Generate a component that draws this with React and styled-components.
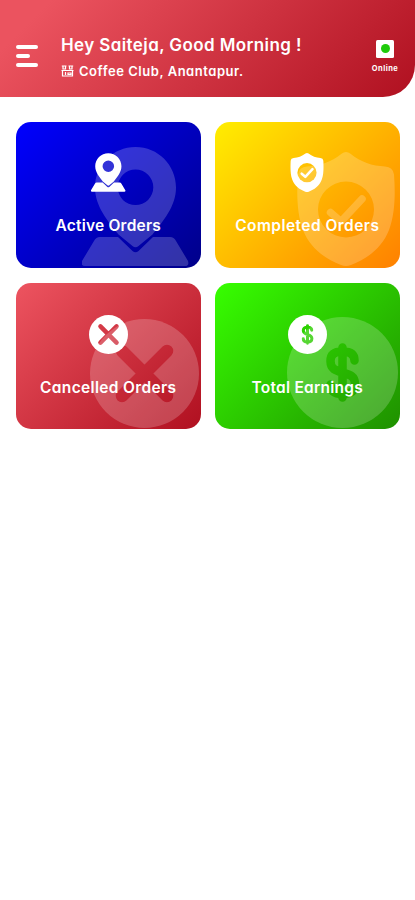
import React, { useId } from 'react'
import styled, { createGlobalStyle } from 'styled-components'

const cards = [
    { label: 'Active Orders', icon: PinIcon, from: '#0000ff', to: '#000089', track: '0.22px', small: [34.5, 39], big: [106.5, 119], right: 12, top: 25 },
    { label: 'Completed Orders', icon: ShieldIcon, from: '#ffee00', to: '#ff8000', track: '0.45px', small: [34, 39], big: [98, 114], right: 5, top: 30 },
    { label: 'Cancelled Orders', icon: CancelIcon, from: '#ed5460', to: '#b01020', track: '0.34px', small: [39, 39], big: [109, 109], right: 2, top: 36 },
    { label: 'Total Earnings', icon: DollarIcon, from: '#37ff00', to: '#1f9000', track: '0.26px', small: [39, 39], big: [111, 111], right: 2, top: 34 },
]

function PinIcon({ size }) {
    return (
        <svg width={size[0]} height={size[1]} viewBox="0 0 106.5 119" fill="currentColor">
            <path fillRule="evenodd" d="M53.5 0C31 0 13 18 13 40.5c0 19 13 33.5 23.5 47L50.5 99q3 2.5 6 0L70.5 87.5C81 74 94 59.5 94 40.5 94 18 76 0 53.5 0zm0 22.500a17.800 17.800 0 1 1 0 35.600 17.800 17.800 0 0 1 0-35.600z" />
            <path d="M18 90h18l14.500 14q3 2.500 6 0L71 90h17q4 0 6 4l12 20q1.500 5-3 5H3q-4.500 0-3-5l12-20q2-4 6-4z" />
        </svg>
    )
}

function ShieldIcon({ size }) {
    const id = useId()
    return (
        <svg width={size[0]} height={size[1]} viewBox="0 0 98 114" fill="currentColor">
            <mask id={id}>
                <rect width="98" height="114" fill="#fff" />
                <circle cx="49" cy="57.5" r="28" fill="#000" />
                <path d="M33.500 60.500 44 69.500 65 47" fill="none" stroke="#fff" strokeWidth="7.500" strokeLinecap="round" strokeLinejoin="round" />
            </mask>
            <path mask={`url(#${id})`} d="M44.500 1.800q4.500-3.600 9 0C64 10 75 14 88 14.500q8 .5 9 8C98.500 42 98 62 92 78 85 96 70 107 54 113q-5 2-10 0C28 107 13 96 6 78 0 62-.5 42 1 22.500q1-7.500 9-8C23 14 34 10 44.500 1.800z" />
        </svg>
    )
}

function CancelIcon({ size }) {
    const id = useId()
    return (
        <svg width={size[0]} height={size[1]} viewBox="0 0 109 109" fill="currentColor">
            <mask id={id}>
                <rect width="109" height="109" fill="#fff" />
                <path d="M32 32l45 45M77 32l-45 45" stroke="#000" strokeWidth="12.500" strokeLinecap="round" />
            </mask>
            <circle cx="54.5" cy="54.5" r="54.5" mask={`url(#${id})`} />
        </svg>
    )
}

function DollarIcon({ size }) {
    const id = useId()
    return (
        <svg width={size[0]} height={size[1]} viewBox="0 0 111 111" fill="currentColor">
            <mask id={id}>
                <rect width="111" height="111" fill="#fff" />
                <path d="M67.500 43.500c0-6-4-9-12-9s-12 3-12 9.500c0 8 5 9.500 12 11.500s12.500 3.500 12.500 11.500c0 7-4.500 10-12.500 10s-12-3-12-9.500M55.500 30.500v50" fill="none" stroke="#000" strokeWidth="8.500" strokeLinecap="round" />
            </mask>
            <circle cx="55.5" cy="55.5" r="55.5" mask={`url(#${id})`} />
        </svg>
    )
}

function CafeIcon() {
    return (
        <svg width="13" height="12" viewBox="0 0 13 12" fill="none" stroke="#fff" strokeWidth="1.200">
            <path d="M.8 1h4.700M7.500 1h4.700M2 1v3h2.500V1M8.500 1v3H11V1M.5 5.500h12M1.500 5.500V11h10V5.500M4.500 7v3M7 8h3v1.500H7z" />
        </svg>
    )
}

const App = () => {
    return (
        <Page>
            <GlobalStyle />
            <Header>
                <MenuButton aria-label="Menu">
                    <MenuLine $width="21.5px" />
                    <MenuLine $width="13.5px" />
                    <MenuLine $width="21.5px" />
                </MenuButton>
                <Info>
                    <Greeting>Hey Saiteja, Good Morning !</Greeting>
                    <Place>
                        <CafeIcon />
                        <span>Coffee Club, Anantapur.</span>
                    </Place>
                </Info>
                <Status>
                    <StatusBox><StatusDot /></StatusBox>
                    <span>Online</span>
                </Status>
            </Header>
            <Grid>
                {cards.map(({ label, icon: Icon, from, to, track, small, big, right, top }) => (
                    <Card key={label} $from={from} $to={to}>
                        <Watermark $right={right} $top={top}><Icon size={big} /></Watermark>
                        <IconSlot><Icon size={small} /></IconSlot>
                        <Label $track={track}>{label}</Label>
                    </Card>
                ))}
            </Grid>
        </Page>
    )
}

export default App

const GlobalStyle = createGlobalStyle`
    * { box-sizing: border-box; }
    body {
        margin: 0;
        background: #fff;
        font-family: Inter, "Liberation Sans", sans-serif;
        font-feature-settings: "cv11";
    }
    svg { display: block; }
`

const Page = styled.div`
    min-height: 900px;
    background: #fff;
`

const Header = styled.header`
    display: flex;
    align-items: flex-start;
    height: 97px;
    padding: 34px 16px 0;
    color: #fff;
    background: linear-gradient(135deg, #eb535f 10%, #b01020 100%);
    border-bottom-right-radius: 32px;
`

const MenuButton = styled.button`
    display: flex;
    flex-direction: column;
    gap: 4.5px;
    margin-top: 10.5px;
    padding: 0;
    border: none;
    background: none;
`

const MenuLine = styled.span`
    width: ${(props) => props.$width};
    height: 4.5px;
    border-radius: 3px;
    background: #fff;
`

const Info = styled.div`
    flex: 1;
    margin-left: 23.5px;
`

const Greeting = styled.div`
    font-size: 17px;
    font-weight: 600;
    line-height: 22px;
    letter-spacing: 0.4px;
    white-space: nowrap;
`

const Place = styled.div`
    display: flex;
    align-items: center;
    gap: 5px;
    margin-top: 6px;
    font-size: 13px;
    font-weight: 600;
    line-height: 18px;
    letter-spacing: 0.54px;
    white-space: nowrap;
`

const Status = styled.div`
    display: flex;
    flex-direction: column;
    align-items: center;
    width: 28px;
    margin-top: 5.5px;
    font-size: 7.5px;
    font-weight: 700;
    line-height: 10px;
    letter-spacing: 0.45px;
`

const StatusBox = styled.div`
    display: grid;
    place-items: center;
    width: 18px;
    height: 18px;
    margin-bottom: 6px;
    border-radius: 1.5px;
    background: #fff;
`

const StatusDot = styled.div`
    width: 9px;
    height: 9px;
    border-radius: 50%;
    background: #1fcb0b;
`

const Grid = styled.main`
    display: grid;
    grid-template-columns: 1fr 1fr;
    gap: 15.5px 14.5px;
    padding: 24.5px 15.5px 0 16px;
`

const Card = styled.section`
    position: relative;
    display: flex;
    flex-direction: column;
    align-items: center;
    height: 146px;
    padding-top: 31.5px;
    overflow: hidden;
    border-radius: 15px;
    color: #fff;
    background: linear-gradient(135deg, ${(props) => props.$from}, ${(props) => props.$to});
`

const Watermark = styled.div`
    position: absolute;
    top: ${(props) => props.$top}px;
    right: ${(props) => props.$right}px;
    opacity: 0.2;
`

const IconSlot = styled.div`
    position: relative;
    height: 39px;
`

const Label = styled.div`
    position: relative;
    margin-top: 23px;
    font-size: 15.5px;
    font-weight: 600;
    line-height: 22px;
    letter-spacing: ${(props) => props.$track};
    white-space: nowrap;
`
